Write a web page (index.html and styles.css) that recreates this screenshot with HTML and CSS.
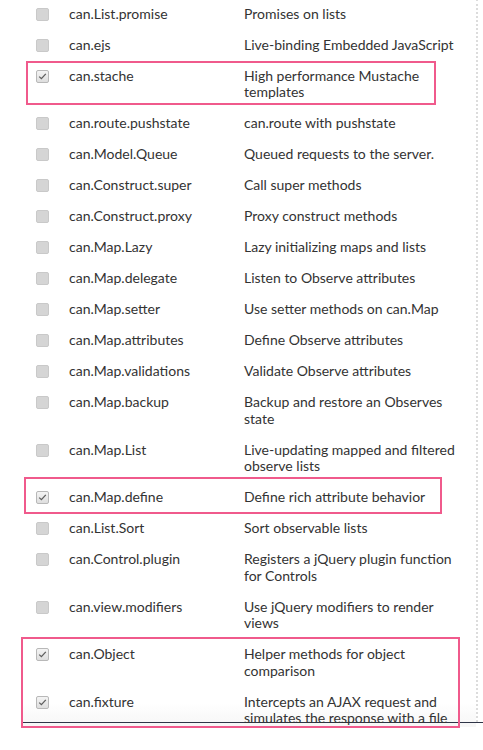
FILE: index.html
```html
<!DOCTYPE html>
<html>
<head>
<meta charset="utf-8">
<link rel="stylesheet" href="styles.css">
</head>
<body>
<div class="page">
  <div class="panel">
    <div class="list">
      <div class="row"><span class="cb"></span><span class="name">can.List.promise</span><span class="desc">Promises on lists</span></div>
      <div class="row"><span class="cb"></span><span class="name">can.ejs</span><span class="desc">Live-binding Embedded JavaScript</span></div>
      <div class="row"><span class="cb on"><svg viewBox="0 0 13 13"><path d="M2.6 6.6 L5.2 9.1 L10.4 3.4" /></svg></span><span class="name">can.stache</span><span class="desc">High performance Mustache templates</span></div>
      <div class="row"><span class="cb"></span><span class="name">can.route.pushstate</span><span class="desc">can.route with pushstate</span></div>
      <div class="row"><span class="cb"></span><span class="name">can.Model.Queue</span><span class="desc">Queued requests to the server.</span></div>
      <div class="row"><span class="cb"></span><span class="name">can.Construct.super</span><span class="desc">Call super methods</span></div>
      <div class="row"><span class="cb"></span><span class="name">can.Construct.proxy</span><span class="desc">Proxy construct methods</span></div>
      <div class="row"><span class="cb"></span><span class="name">can.Map.Lazy</span><span class="desc">Lazy initializing maps and lists</span></div>
      <div class="row"><span class="cb"></span><span class="name">can.Map.delegate</span><span class="desc">Listen to Observe attributes</span></div>
      <div class="row"><span class="cb"></span><span class="name">can.Map.setter</span><span class="desc">Use setter methods on can.Map</span></div>
      <div class="row"><span class="cb"></span><span class="name">can.Map.attributes</span><span class="desc">Define Observe attributes</span></div>
      <div class="row"><span class="cb"></span><span class="name">can.Map.validations</span><span class="desc">Validate Observe attributes</span></div>
      <div class="row"><span class="cb"></span><span class="name">can.Map.backup</span><span class="desc">Backup and restore an Observes state</span></div>
      <div class="row"><span class="cb"></span><span class="name">can.Map.List</span><span class="desc">Live-updating mapped and filtered observe lists</span></div>
      <div class="row"><span class="cb on"><svg viewBox="0 0 13 13"><path d="M2.6 6.6 L5.2 9.1 L10.4 3.4" /></svg></span><span class="name">can.Map.define</span><span class="desc">Define rich attribute behavior</span></div>
      <div class="row"><span class="cb"></span><span class="name">can.List.Sort</span><span class="desc">Sort observable lists</span></div>
      <div class="row"><span class="cb"></span><span class="name">can.Control.plugin</span><span class="desc">Registers a jQuery plugin function for Controls</span></div>
      <div class="row"><span class="cb"></span><span class="name">can.view.modifiers</span><span class="desc">Use jQuery modifiers to render views</span></div>
      <div class="row"><span class="cb on"><svg viewBox="0 0 13 13"><path d="M2.6 6.6 L5.2 9.1 L10.4 3.4" /></svg></span><span class="name">can.Object</span><span class="desc">Helper methods for object comparison</span></div>
      <div class="row last"><span class="cb on"><svg viewBox="0 0 13 13"><path d="M2.6 6.6 L5.2 9.1 L10.4 3.4" /></svg></span><span class="name">can.fixture</span><span class="desc">Intercepts an AJAX request and simulates the response with a file</span></div>
    </div>
  </div>
  <div class="footer"></div>
  <div class="mark mark-1"></div>
  <div class="mark mark-2"></div>
  <div class="mark mark-3"></div>
</div>
</body>
</html>
```

FILE: styles.css
```css
html, body {
  margin: 0;
  padding: 0;
  background: #ffffff;
}

.page {
  position: relative;
  width: 483px;
  height: 750px;
  overflow: hidden;
  font-family: Lato, "Open Sans", sans-serif;
  font-size: 14px;
  color: #333333;
}

.panel {
  margin-left: 22px;
  width: 456px;
  height: 723px;
  box-sizing: border-box;
  border-right: 2px dotted #dcdcdc;
}

.list {
  margin-top: -1.5px;
}

.row {
  display: grid;
  grid-template-columns: 47px 175px 1fr;
  padding: 7.25px 8px 7.25px 0;
  line-height: 16.5px;
}

.row.last {
  padding-bottom: 0;
  background: linear-gradient(#ffffff 40%, #f6f6f6 100%);
}

.cb {
  display: block;
  width: 13px;
  height: 13px;
  margin: 1.75px 0 0 14px;
  box-sizing: border-box;
  border: 1px solid #c9c9c9;
  border-radius: 2px;
  background: #d5d5d5;
}

.cb.on {
  border-color: #b8b8b8;
  background: linear-gradient(#f4f4f4, #dedede);
}

.cb svg {
  display: block;
  width: 11px;
  height: 11px;
}

.cb svg path {
  fill: none;
  stroke: #5e5e5e;
  stroke-width: 1.5;
}

.name, .desc {
  display: block;
}

.footer {
  margin-left: 22px;
  border-top: 1px solid #2e3447;
}

.mark {
  position: absolute;
  box-sizing: border-box;
  border: 2px solid #f05a8c;
  pointer-events: none;
}

.mark-1 { left: 26px; top: 61px; width: 410px; height: 44px; }
.mark-2 { left: 24px; top: 477px; width: 418px; height: 37px; }
.mark-3 { left: 21px; top: 637px; width: 439px; height: 91px; }
```
